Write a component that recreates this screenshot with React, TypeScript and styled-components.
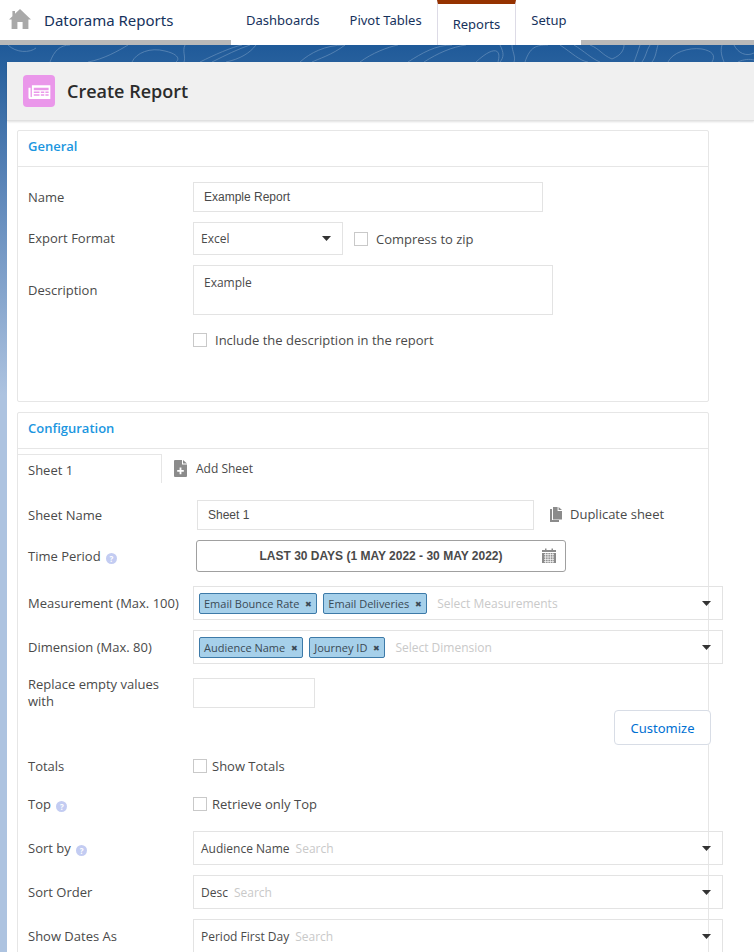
import React from 'react';
import styled, { createGlobalStyle } from 'styled-components';

const GlobalStyle = createGlobalStyle`
    html, body {
        margin: 0;
        padding: 0;
        height: 952px;
        overflow: hidden;
        background: #fff;
        font-family: "Open Sans", "Noto Sans", sans-serif;
        color: #3e3e3c;
    }
    * { box-sizing: border-box; }
`;

const TopNav: React.FC = () => (
    <NavBar>
        <HomeIcon viewBox="0 0 22 20">
            <path d="M11 0 L22 10.5 L19.4 10.5 L19.4 20 L13.6 20 L13.6 13 L8.4 13 L8.4 20 L2.6 20 L2.6 10.5 L0 10.5 L3.4 7.2 L3.4 2 L6 2 L6 4.8 Z" fill="#a9a9a9" />
        </HomeIcon>
        <AppName>Datorama Reports</AppName>
        <NavItems>
            <NavItem>Dashboards</NavItem>
            <NavItem>Pivot Tables</NavItem>
            <NavItem $active>Reports</NavItem>
            <NavItem>Setup</NavItem>
        </NavItems>
    </NavBar>
);

const Contours: React.FC = () => (
    <ContourSvg viewBox="0 0 754 17" preserveAspectRatio="none">
        <g fill="none" stroke="#5f8ab8" strokeWidth="0.8">
            <path d="M8 0 C16 8 30 8 36 3 M50 17 C54 6 60 0 70 0 M88 17 C104 14 118 6 128 0 M132 17 C136 8 150 2 165 6 C178 9 180 14 176 17" />
            <path d="M185 0 C182 6 186 12 184 17 M200 17 C214 10 232 2 242 0 M256 0 C250 8 240 14 226 17 M212 17 C226 10 238 4 250 0" />
            <path d="M300 17 C310 8 325 0 345 0 M345 0 C332 10 318 14 312 17 M360 17 C372 8 388 2 398 0 M408 17 C422 8 436 0 452 0 M424 17 C438 8 452 2 466 0" />
            <path d="M476 17 C492 2 502 2 498 17 M500 0 C504 8 504 12 500 17 M512 0 C512 6 516 12 514 17 M525 17 C530 2 536 0 548 0" />
            <path d="M560 0 C572 8 580 16 588 17 M574 0 C584 6 592 14 600 17 M590 0 C600 4 602 10 612 14 C622 10 624 4 624 0 M640 0 C638 6 636 12 634 17 M650 0 C646 6 646 12 642 17 M658 0 C656 6 656 12 652 17" />
            <path d="M668 17 C672 8 688 2 702 4 C712 6 716 10 712 17 M722 0 C720 6 722 12 724 17 M734 0 C738 8 746 12 754 8 M738 17 C744 14 750 14 754 15" />
        </g>
    </ContourSvg>
);

const InfoDot: React.FC = () => <Info>?</Info>;

const Caret: React.FC = () => (
    <CaretIcon viewBox="0 0 9 5"><path d="M0 0 H9 L4.5 5 Z" fill="#333" /></CaretIcon>
);

const App: React.FC = () => (
    <>
        <GlobalStyle />
        <TopNav />
        <GrayBar />
        <Stage>
            <Contours />
            <Panel>
                <PanelHeader>
                    <ReportIcon>
                        <svg viewBox="0 0 24 20" width="23" height="19">
                            <path d="M4 3.4 H23.4 V18 H2.2 C1 18 0.4 17 0.4 16 V6 H2.6 V15.6 C2.6 16.2 3.8 16.2 4 15.6 Z" fill="#fff" />
                            <path d="M6 6 H21.6 V8.6 H6 Z M6 10 H12 V11.6 H6 Z M13.4 10 H17 V11.6 H13.4 Z M18.2 10 H21.6 V11.6 H18.2 Z M6 13 H12 V14.6 H6 Z M13.4 13 H17 V14.6 H13.4 Z M18.2 13 H21.6 V14.6 H18.2 Z" fill="#ea97ea" />
                        </svg>
                    </ReportIcon>
                    <PageTitle>Create Report</PageTitle>
                </PanelHeader>

                <Card $height={272} $top={9}>
                    <CardTitle>General</CardTitle>
                    <Row $top={15}>
                        <Label>Name</Label>
                        <TextBox $width={350} $height={30}>Example Report</TextBox>
                    </Row>
                    <Row $top={10}>
                        <Label>Export Format</Label>
                        <PlainSelect>
                            Excel
                            <Caret />
                        </PlainSelect>
                        <CheckLabel $gap={8} $left={11}><Check />Compress to zip</CheckLabel>
                    </Row>
                    <Row $top={10}>
                        <Label>Description</Label>
                        <TextArea>Example</TextArea>
                    </Row>
                    <Row $top={16}>
                        <Label />
                        <CheckLabel $gap={8}><Check />Include the description in the report</CheckLabel>
                    </Row>
                </Card>

                <Card $height={560} $top={10}>
                    <CardTitle>Configuration</CardTitle>
                    <SheetTabs>
                        <SheetTab>Sheet 1</SheetTab>
                        <AddSheet>
                            <svg viewBox="0 0 13 17" width="13" height="17">
                                <path d="M0 1 Q0 0 1 0 H8 V4.6 H13 V16 Q13 17 12 17 H1 Q0 17 0 16 Z M9 0 L13 3.6 H9 Z" fill="#8b8b8b" />
                                <path d="M5.6 7.6 H7.4 V10 H9.8 V11.8 H7.4 V14.2 H5.6 V11.8 H3.2 V10 H5.6 Z" fill="#fff" />
                            </svg>
                            Add Sheet
                        </AddSheet>
                    </SheetTabs>
                    <Row $top={17}>
                        <Label $width={179}>Sheet Name</Label>
                        <TextBox $width={337} $height={30}>Sheet 1</TextBox>
                        <Duplicate>
                            <svg viewBox="0 0 12 15" width="12" height="15">
                                <path d="M0 2 H2 V13 H9 V15 H0 Z" fill="#8b8b8b" />
                                <path d="M3 0 H7.6 V4 H12 V12.4 H3 Z M8.6 0 L12 3 H8.6 Z" fill="#8b8b8b" />
                            </svg>
                            Duplicate sheet
                        </Duplicate>
                    </Row>
                    <Row $top={10}>
                        <Label $width={178}>Time Period <InfoDot /></Label>
                        <DateButton>
                            LAST 30 DAYS (1 MAY 2022 - 30 MAY 2022)
                            <CalendarSvg viewBox="0 0 14 15">
                                <path d="M0 2 H3 V0.5 H4.5 V2 H9.5 V0.5 H11 V2 H14 V4 H0 Z" fill="#8b8b8b" />
                                <path d="M0 5 H14 V15 H0 Z" fill="#8b8b8b" />
                                <path d="M2 6.6 H12 M2 9 H12 M2 11.4 H12 M2 13.6 H12 M3.6 5 V15 M6 5 V15 M8.4 5 V15 M10.8 5 V15" stroke="#fff" strokeWidth="0.7" />
                            </CalendarSvg>
                        </DateButton>
                    </Row>
                    <Row $top={14}>
                        <Label>Measurement (Max. 100)</Label>
                        <MultiSelect>
                            <Pill>Email Bounce Rate<PillX>✖</PillX></Pill>
                            <Pill>Email Deliveries<PillX>✖</PillX></Pill>
                            <Placeholder $left={4}>Select Measurements</Placeholder>
                            <Caret />
                        </MultiSelect>
                    </Row>
                    <Row $top={10}>
                        <Label>Dimension (Max. 80)</Label>
                        <MultiSelect>
                            <Pill>Audience Name<PillX>✖</PillX></Pill>
                            <Pill>Journey ID<PillX>✖</PillX></Pill>
                            <Placeholder $left={4}>Select Dimension</Placeholder>
                            <Caret />
                        </MultiSelect>
                    </Row>
                    <Row $top={12}>
                        <Label>Replace empty values with</Label>
                        <TextBox $width={122} $height={30} />
                    </Row>
                    <CustomizeRow>
                        <CustomizeButton>Customize</CustomizeButton>
                    </CustomizeRow>
                    <Row $top={12}>
                        <Label>Totals</Label>
                        <CheckLabel $gap={5}><Check />Show Totals</CheckLabel>
                    </Row>
                    <Row $top={20}>
                        <Label>Top <InfoDot /></Label>
                        <CheckLabel $gap={5}><Check />Retrieve only Top</CheckLabel>
                    </Row>
                    <Row $top={18}>
                        <Label>Sort by <InfoDot /></Label>
                        <SearchSelect>
                            Audience Name<Placeholder $left={6}>Search</Placeholder>
                            <Caret />
                        </SearchSelect>
                    </Row>
                    <Row $top={10}>
                        <Label>Sort Order</Label>
                        <SearchSelect>
                            Desc<Placeholder $left={6}>Search</Placeholder>
                            <Caret />
                        </SearchSelect>
                    </Row>
                    <Row $top={10}>
                        <Label>Show Dates As</Label>
                        <SearchSelect>
                            Period First Day<Placeholder $left={6}>Search</Placeholder>
                            <Caret />
                        </SearchSelect>
                    </Row>
                    <Row $top={10}>
                        <Label />
                        <SearchSelect />
                    </Row>
                </Card>
            </Panel>
        </Stage>
    </>
);

// --- STYLED COMPONENTS ---
const NavBar = styled.nav`
    display: flex;
    align-items: center;
    height: 40px;
    background: #fff;
    padding-left: 9px;
    position: relative;
    z-index: 2;
`;

const HomeIcon = styled.svg`
    width: 22px;
    height: 20px;
    margin-top: -2px;
`;

const AppName = styled.div`
    font-family: "Noto Sans", "Open Sans", sans-serif;
    font-size: 15px;
    color: #16325c;
    margin-left: 13px;
    width: 187px;
`;

const NavItems = styled.div`
    display: flex;
    height: 45px;
    align-self: flex-start;
`;

const NavItem = styled.div<{ $active?: boolean }>`
    font-family: "Noto Sans", "Open Sans", sans-serif;
    font-size: 13px;
    color: #16325c;
    height: 45px;
    padding: 0 15px;
    display: flex;
    align-items: center;
    padding-bottom: 6px;
    background: #fff;
    ${({ $active }) => $active && `
        margin: 0 0 0 0;
        border-top: 4px solid #953200;
        border-left: 1px solid #dddbe6;
        border-right: 1px solid #dddbe6;
        padding: 0 15px 2px;
    `}
`;

const GrayBar = styled.div`
    height: 5px;
    background: #b9b9b9;
`;

const Stage = styled.div`
    position: relative;
    height: 907px;
    padding: 17px 0 0 7px;
    background: linear-gradient(180deg, #1f5a99 0, #5f88ba 150px, #adc3e0 350px, #adc3e0 100%);
`;

const ContourSvg = styled.svg`
    position: absolute;
    top: 0;
    left: 0;
    width: 754px;
    height: 17px;
`;

const Panel = styled.main`
    position: relative;
    height: 890px;
    background: #fff;
    padding: 0 0 0 0;
`;

const PanelHeader = styled.header`
    display: flex;
    align-items: center;
    height: 59px;
    padding-left: 16px;
    background: #f0f0f0;
    border-bottom: 1px solid #e0e0e0;
    box-shadow: 0 1px 2px rgba(0, 0, 0, 0.12);
`;

const ReportIcon = styled.div`
    width: 32px;
    height: 32px;
    border-radius: 4px;
    background: #ea97ea;
    display: flex;
    align-items: center;
    justify-content: center;
`;

const PageTitle = styled.h1`
    font-family: "Open Sans", sans-serif;
    font-size: 18px;
    font-weight: 600;
    color: #2b2b2b;
    margin: 0 0 0 12px;
`;

const Card = styled.section<{ $height: number; $top: number }>`
    width: 692px;
    height: ${({ $height }) => $height}px;
    margin: ${({ $top }) => $top}px 0 0 10px;
    border: 1px solid #e6e6e6;
    border-radius: 2px;
    background: #fff;
`;

const CardTitle = styled.h2`
    height: 36px;
    line-height: 30px;
    margin: 0;
    padding-left: 10px;
    font-size: 13px;
    font-weight: 600;
    color: #1b96e0;
    border-bottom: 1px solid #e6e6e6;
`;

const Row = styled.div<{ $top: number }>`
    display: flex;
    align-items: center;
    margin-top: ${({ $top }) => $top}px;
`;

const Label = styled.label<{ $width?: number }>`
    flex: none;
    width: ${({ $width }) => $width ?? 175}px;
    padding-left: 10px;
    padding-right: 8px;
    font-size: 13px;
    line-height: 17px;
    color: #4a4a4a;
    white-space: normal;
`;

const Info = styled.span`
    display: inline-flex;
    align-items: center;
    justify-content: center;
    width: 11px;
    height: 11px;
    margin-left: 2px;
    border-radius: 50%;
    background: #c3ccf2;
    color: #fff;
    font-size: 8px;
    font-weight: 700;
    vertical-align: -1px;
`;

const TextBox = styled.div<{ $width: number; $height: number }>`
    flex: none;
    width: ${({ $width }) => $width}px;
    height: ${({ $height }) => $height}px;
    line-height: 28px;
    padding-left: 10px;
    border: 1px solid #e3e3e3;
    font-family: "Liberation Sans", Arial, sans-serif;
    font-size: 12px;
    color: #4a4a4a;
`;

const PlainSelect = styled.div`
    flex: none;
    display: flex;
    align-items: center;
    justify-content: space-between;
    width: 150px;
    height: 33px;
    padding: 0 11px 0 7px;
    border: 1px solid #e3e3e3;
    font-size: 12px;
    color: #4a4a4a;
`;

const CaretIcon = styled.svg`
    width: 9px;
    height: 5px;
    flex: none;
    margin-left: auto;
`;

const Check = styled.span`
    flex: none;
    width: 14px;
    height: 14px;
    border: 1px solid #c9c9c9;
    background: #fff;
`;

const CheckLabel = styled.div<{ $gap: number; $left?: number }>`
    display: flex;
    align-items: center;
    gap: ${({ $gap }) => $gap}px;
    margin-left: ${({ $left }) => $left ?? 0}px;
    font-size: 13px;
    color: #4a4a4a;
`;

const TextArea = styled.div`
    flex: none;
    width: 360px;
    height: 50px;
    padding: 8px 10px;
    border: 1px solid #e3e3e3;
    font-size: 12px;
    color: #4a4a4a;
`;

const SheetTabs = styled.div`
    display: flex;
    align-items: flex-start;
    margin-top: 5px;
    height: 29px;
`;

const SheetTab = styled.div`
    width: 144px;
    height: 29px;
    padding: 6px 0 0 10px;
    border-top: 1px solid #e6e6e6;
    border-right: 1px solid #e6e6e6;
    font-size: 13px;
    color: #4a4a4a;
`;

const AddSheet = styled.div`
    display: flex;
    align-items: center;
    gap: 9px;
    margin: 6px 0 0 12px;
    font-size: 12px;
    color: #4a4a4a;
`;

const Duplicate = styled.div`
    display: flex;
    align-items: center;
    gap: 8px;
    margin: -2px 0 0 16px;
    font-size: 13px;
    color: #4a4a4a;
`;

const DateButton = styled.div`
    flex: none;
    position: relative;
    display: flex;
    align-items: center;
    justify-content: center;
    width: 370px;
    height: 32px;
    padding-right: 0;
    border: 1px solid #a0a0a0;
    border-radius: 3px;
    font-family: "Liberation Sans", Arial, sans-serif;
    font-size: 12px;
    font-weight: 700;
    color: #4a4a4a;
`;

const CalendarSvg = styled.svg`
    position: absolute;
    right: 9px;
    top: 7px;
    width: 14px;
    height: 15px;
`;

const MultiSelect = styled.div`
    flex: none;
    display: flex;
    align-items: center;
    gap: 6px;
    width: 530px;
    height: 34px;
    padding: 0 11px 0 5px;
    border: 1px solid #e3e3e3;
`;

const Pill = styled.span`
    display: inline-flex;
    align-items: center;
    height: 21px;
    padding: 0 4px;
    gap: 6px;
    border: 1px solid #3d7aa8;
    border-radius: 2px;
    background: #a6d0ea;
    font-size: 11px;
    color: #3a4a55;
`;

const PillX = styled.span`
    font-size: 8px;
    color: #3a4a55;
`;

const Placeholder = styled.span<{ $left: number }>`
    margin-left: ${({ $left }) => $left}px;
    font-size: 12px;
    color: #c9c9c9;
`;

const SearchSelect = styled.div`
    flex: none;
    display: flex;
    align-items: center;
    width: 530px;
    height: 34px;
    padding: 0 11px 0 7px;
    border: 1px solid #e3e3e3;
    font-size: 12px;
    color: #4a4a4a;
`;

const CustomizeRow = styled.div`
    display: flex;
    justify-content: flex-end;
    height: 35px;
    margin-top: 0;
    padding-right: -3px;
`;

const CustomizeButton = styled.button`
    width: 97px;
    height: 35px;
    margin-right: -3px;
    border: 1px solid #d8dde6;
    border-radius: 4px;
    background: #fff;
    color: #0070d2;
    font-family: "Noto Sans", sans-serif;
    font-size: 13px;
`;

export default App;
